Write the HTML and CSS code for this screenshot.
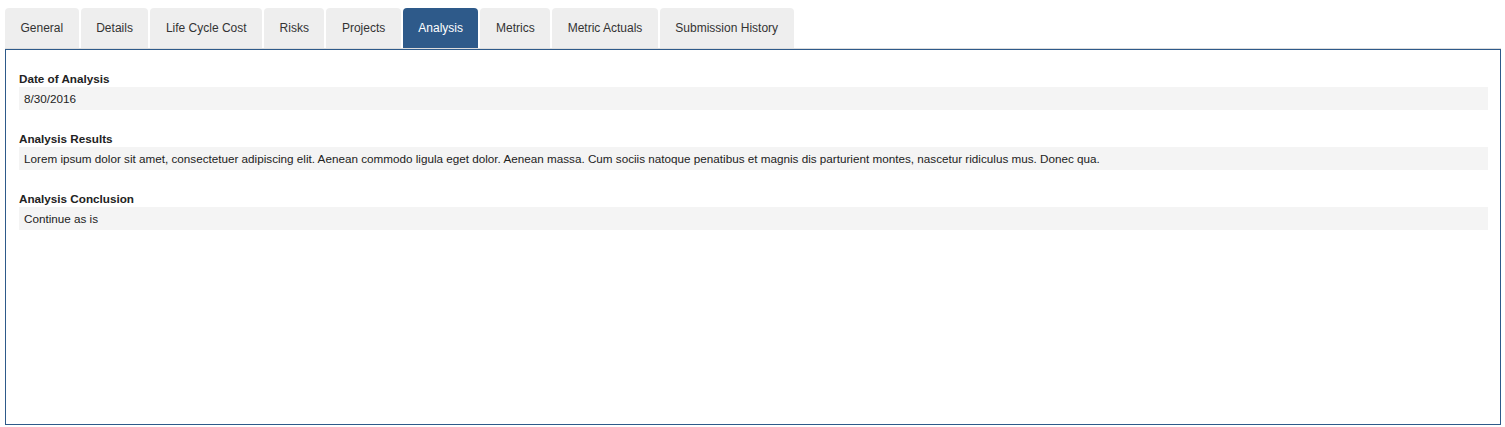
FILE: index.html
```html
<!DOCTYPE html>
<html lang="en">
  <head>
    <meta charset="UTF-8" />
    <title>Analysis</title>
    <link rel="stylesheet" href="styles.css">
  </head>
  <body>
    <div class="page">
      <!-- TABS -->
      <ul class="tabs">
        <li><a href="#">General</a></li>
        <li><a href="#">Details</a></li>
        <li><a href="#">Life Cycle Cost</a></li>
        <li><a href="#">Risks</a></li>
        <li><a href="#">Projects</a></li>
        <li class="active"><a href="#">Analysis</a></li>
        <li><a href="#">Metrics</a></li>
        <li><a href="#">Metric Actuals</a></li>
        <li><a href="#">Submission History</a></li>
      </ul>

      <!-- PANEL -->
      <div class="tab-panel">
        <div class="field">
          <div class="field-label">Date of Analysis</div>
          <div class="field-value">8/30/2016</div>
        </div>
        <div class="field">
          <div class="field-label">Analysis Results</div>
          <div class="field-value">Lorem ipsum dolor sit amet, consectetuer adipiscing elit. Aenean commodo ligula eget dolor. Aenean massa. Cum sociis natoque penatibus et magnis dis parturient montes, nascetur ridiculus mus. Donec qua.</div>
        </div>
        <div class="field">
          <div class="field-label">Analysis Conclusion</div>
          <div class="field-value">Continue as is</div>
        </div>
      </div>
    </div>
  </body>
</html>
```

FILE: styles.css
```css
body {
  margin: 0;
  font-family: "Liberation Sans", Arial, sans-serif;
  font-size: 11.7px;
  color: #222;
  background: #fff;
}

.page {
  padding: 8px 4px 0 5px;
}

.tabs {
  display: flex;
  list-style: none;
  margin: 0;
  padding: 0;
  border-bottom: 1px solid #ddd;
}

.tabs li {
  margin-right: 2px;
}

.tabs a {
  display: block;
  height: 40px;
  line-height: 40px;
  padding: 0 15.5px;
  font-size: 12px;
  background: #eee;
  color: #333;
  text-decoration: none;
  border-radius: 4px 4px 0 0;
}

.tabs li.active a {
  background: #2e5a8a;
  color: #fff;
}

.tab-panel {
  height: 376px;
  border: 1px solid #2e5a8a;
  padding: 21px 12px 0 13px;
  box-sizing: border-box;
}

.field {
  margin-bottom: 21px;
}

.field-label {
  font-weight: bold;
  line-height: 16px;
}

.field-value {
  background: #f4f4f4;
  line-height: 23px;
  padding: 0 5px;
}
```
